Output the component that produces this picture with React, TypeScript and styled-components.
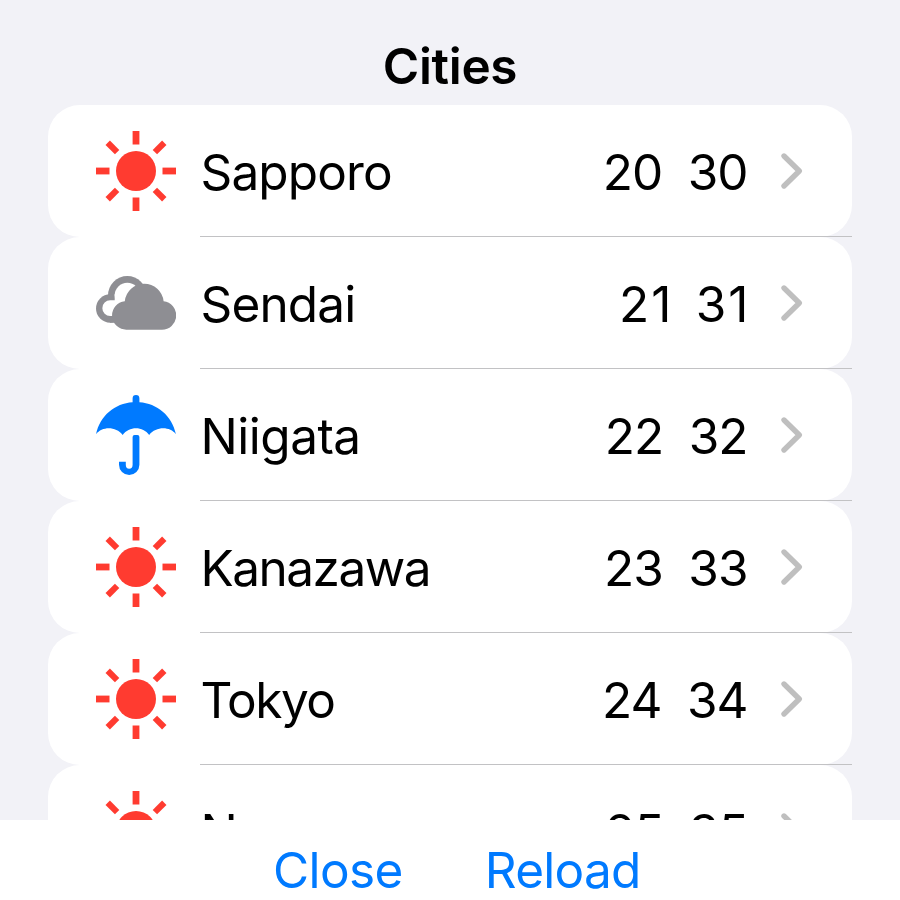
import React from "react";
import styled, { createGlobalStyle } from "styled-components";

const GlobalStyle = createGlobalStyle`
  * { box-sizing: border-box; }
  body { margin: 0; background: #f2f2f7; overflow: hidden; }
`;

const Screen = styled.main`
  display: flex;
  flex-direction: column;
  width: 900px;
  height: 900px;
  overflow: hidden;
  background: #f2f2f7;
  color: #000;
  font-family: Inter, "Liberation Sans", sans-serif;
  font-size: 49.5px;
  line-height: 60px;
`;

const Header = styled.header`
  flex: none;
  height: 105px;
  padding-top: 36px;
  text-align: center;
`;

const Title = styled.h1`
  margin: 0;
  font-size: 49.5px;
  font-weight: 600;
  letter-spacing: -0.3px;
`;

const List = styled.ul`
  flex: 1;
  min-height: 0;
  margin: 0;
  padding: 0 48px;
  overflow: hidden;
  list-style: none;
`;

const Row = styled.li`
  position: relative;
  height: 132px;

  &::after {
    content: "";
    position: absolute;
    left: 152px;
    right: 0;
    bottom: 0;
    height: 1px;
    background: #c2c2c4;
  }
`;

const Card = styled.div`
  display: flex;
  align-items: center;
  height: 132px;
  padding: 0 48px;
  border-radius: 32px;
  background: #fff;
`;

const Icon = styled.svg`
  flex: none;
  width: 80px;
  height: 80px;
`;

const Name = styled.span<{ $spacing: number }>`
  flex: 1;
  margin-left: 24.5px;
  padding-top: 2px;
  letter-spacing: ${(p) => p.$spacing}px;
`;

const Temps = styled.div`
  display: flex;
  gap: 24.5px;
  padding-top: 2px;
`;

const Temp = styled.span<{ $spacing: number }>`
  margin-right: ${(p) => -p.$spacing}px;
  letter-spacing: ${(p) => p.$spacing}px;
`;

const Chevron = styled.svg`
  flex: none;
  width: 24px;
  height: 40px;
  margin-left: 31.5px;
`;

const Toolbar = styled.footer`
  flex: none;
  display: flex;
  height: 80px;
  padding: 20px 0 0 273px;
  gap: 82px;
  background: #fff;
`;

const Action = styled.button<{ $spacing: number }>`
  height: 60px;
  padding: 0;
  border: 0;
  background: none;
  color: #007aff;
  font: inherit;
  letter-spacing: ${(p) => p.$spacing}px;
`;

type Weather = "sunny" | "cloudy" | "rainy";

const Sun = () => (
  <Icon viewBox="-40 -40 80 80" fill="#ff3b30">
    <circle r="20" />
    {[0, 90, 180, 270].map((a) => (
      <rect key={a} x="-3.4" y="-40" width="6.8" height="13.5" transform={`rotate(${a})`} />
    ))}
    {[45, 135, 225, 315].map((a) => (
      <rect key={a} x="-3.1" y="-40" width="6.2" height="13.3" transform={`rotate(${a})`} />
    ))}
  </Icon>
);

const Clouds = () => (
  <Icon viewBox="0 0 80 80">
    <g fill="#8e8e93">
      <circle cx="31.3" cy="32.3" r="19.3" />
      <circle cx="14.2" cy="45.5" r="14.2" />
      <path d="M14 45h18v14.7H14z" />
    </g>
    <g fill="#fff">
      <circle cx="31.3" cy="32.3" r="12.6" />
      <path d="M18.7 31h20v22H14.2a7.8 7.8 0 0 1 0-15.7h4.5z" />
    </g>
    <path
      fill="#8e8e93"
      d="M31 66.7a14.3 14.3 0 0 1-2.2-28.5a19.5 19.5 0 0 1 38.8 0a14.3 14.3 0 0 1-1.9 28.5z"
    />
  </Icon>
);

const Umbrella = () => (
  <Icon viewBox="0 0 80 80">
    <path
      fill="#007aff"
      d="M36.6 7.2V3.4a3.4 3.4 0 0 1 6.8 0v3.8C61 8.3 76 20.5 80 39.3C74 31.2 60 31.2 53.2 40C47 31 33 31 26.6 40C20 31.2 6 31.2 0 39.3C4 20.5 19 8.3 36.6 7.2z"
    />
    <path
      fill="#007aff"
      d="M36.6 42q0-2 2-2h2.8q2 0 2 2v27.8a10.2 10.2 0 0 1-20.4 0v-3.1h6.8v3.1a3.4 3.9 0 0 0 6.800 0z"
    />
  </Icon>
);

const icons: Record<Weather, React.FC> = { sunny: Sun, cloudy: Clouds, rainy: Umbrella };

const cities: {
  name: string;
  weather: Weather;
  min: number;
  max: number;
  nameSpacing: number;
  tempSpacing: number;
}[] = [
  { name: "Sapporo", weather: "sunny", min: 20, max: 30, nameSpacing: -0.85, tempSpacing: -1 },
  { name: "Sendai", weather: "cloudy", min: 21, max: 31, nameSpacing: -0.85, tempSpacing: 2 },
  { name: "Niigata", weather: "rainy", min: 22, max: 32, nameSpacing: -0.5, tempSpacing: -1 },
  { name: "Kanazawa", weather: "sunny", min: 23, max: 33, nameSpacing: -1.5, tempSpacing: -1 },
  { name: "Tokyo", weather: "sunny", min: 24, max: 34, nameSpacing: -1.5, tempSpacing: -1 },
  { name: "Nagoya", weather: "sunny", min: 25, max: 35, nameSpacing: -0.9, tempSpacing: -1 },
];

export default function App() {
  return (
    <Screen>
      <GlobalStyle />
      <Header>
        <Title>Cities</Title>
      </Header>
      <List>
        {cities.map((city) => {
          const WeatherIcon = icons[city.weather];
          return (
            <Row key={city.name}>
              <Card>
                <WeatherIcon />
                <Name $spacing={city.nameSpacing}>{city.name}</Name>
                <Temps>
                  <Temp $spacing={city.tempSpacing}>{city.min}</Temp>
                  <Temp $spacing={city.tempSpacing}>{city.max}</Temp>
                </Temps>
                <Chevron viewBox="0 0 24 40" fill="none" stroke="#bfbfbf" strokeWidth="5.4" strokeLinecap="round" strokeLinejoin="round">
                  <path d="M4 5L19.3 20L4 35" />
                </Chevron>
              </Card>
            </Row>
          );
        })}
      </List>
      <Toolbar>
        <Action $spacing={-0.6}>Close</Action>
        <Action $spacing={-0.75}>Reload</Action>
      </Toolbar>
    </Screen>
  );
}
